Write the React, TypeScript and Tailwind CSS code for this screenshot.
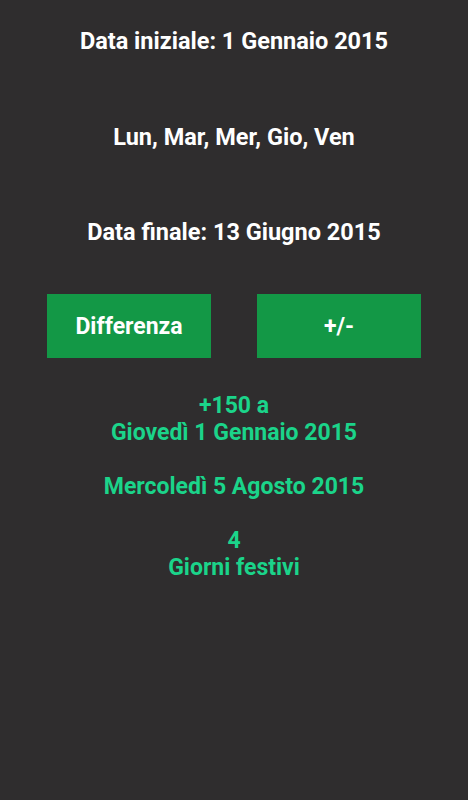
export default function App() {
  const font = { fontFamily: 'Roboto, "Liberation Sans", sans-serif' }

  return (
    <div
      className="w-[468px] h-[800px] bg-[#2f2d2e] flex flex-col items-center text-[23px] font-bold leading-[27px]"
      style={font}
    >
      {/* Header lines */}
      <div className="pt-[28px] text-white text-center text-[23.5px]">Data iniziale: 1 Gennaio 2015</div>
      <div className="mt-[69px] text-white text-center text-[23.5px]">Lun, Mar, Mer, Gio, Ven</div>
      <div className="mt-[68px] text-white text-center text-[23.5px]">Data finale: 13 Giugno 2015</div>

      {/* Buttons */}
      <div className="mt-[48px] w-full px-[47px] flex gap-[46px]">
        <button className="flex-1 h-[64px] bg-[#139846] text-white">Differenza</button>
        <button className="flex-1 h-[64px] bg-[#139846] text-white">+/-</button>
      </div>

      {/* Result */}
      <div className="mt-[34px] text-[#1bd48a] text-center">
        <div>+150 a</div>
        <div>Giovedì 1 Gennaio 2015</div>
        <div className="h-[27px]" />
        <div>Mercoledì 5 Agosto 2015</div>
        <div className="h-[27px]" />
        <div>4</div>
        <div>Giorni festivi</div>
      </div>
    </div>
  )
}
